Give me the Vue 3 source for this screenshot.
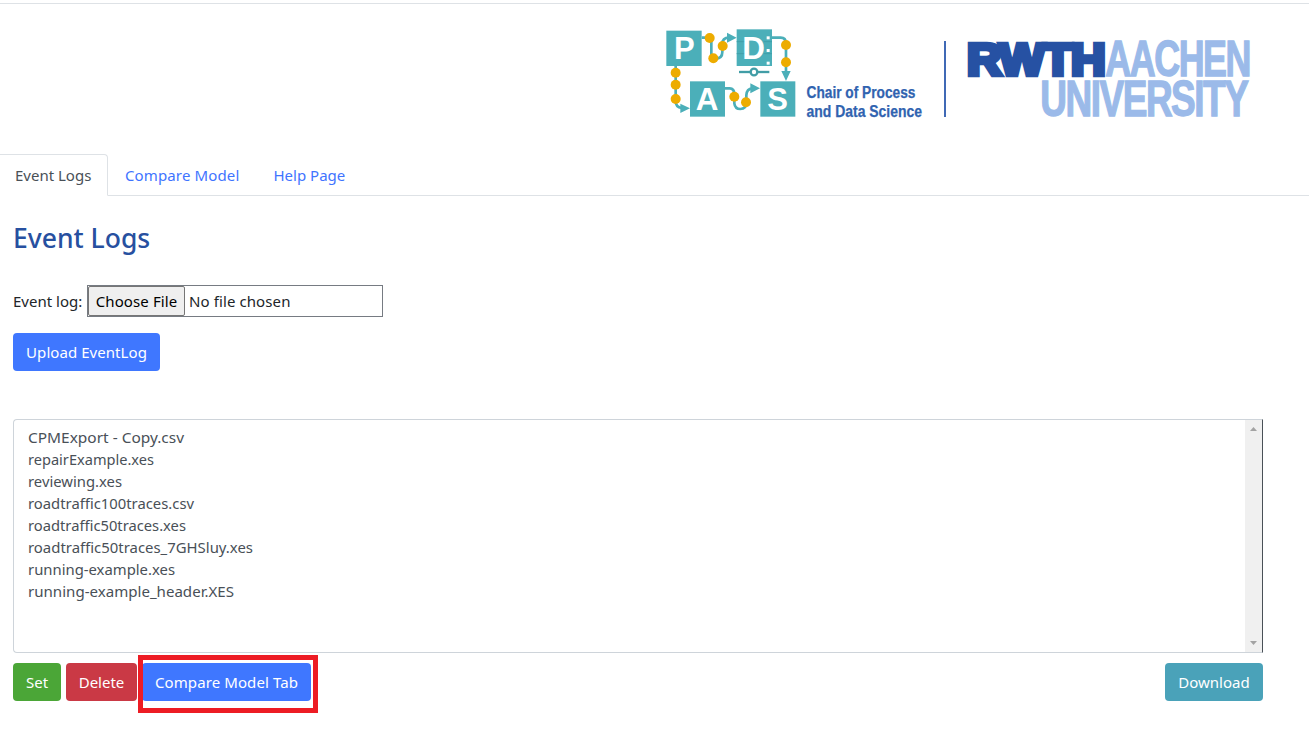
<script setup>
const files = [
  { name: 'CPMExport - Copy.csv', width: 156 },
  { name: 'repairExample.xes', width: 126 },
  { name: 'reviewing.xes', width: 94 },
  { name: 'roadtraffic100traces.csv', width: 166 },
  { name: 'roadtraffic50traces.xes', width: 158 },
  { name: 'roadtraffic50traces_7GHSluy.xes', width: 225 },
  { name: 'running-example.xes', width: 147 },
  { name: 'running-example_header.XES', width: 206 }
]
</script>

<template>
  <div class="page">
    <header class="header">
      <svg class="logos" width="610" height="105" viewBox="0 0 610 105">
        <g transform="scale(0.33333)">
          <g fill="#4bafb9">
            <rect x="34" y="32" width="106" height="106" />
            <rect x="245" y="28" width="106" height="110" />
            <rect x="105" y="184" width="105" height="106" />
            <rect x="316" y="184" width="105" height="106" />
            <path d="M216 38 L245 53 L216 68Z M379 153 H407 L393 183Z M76 251 L105 265 L76 279Z M286 190 L315 205 L286 220Z" />
          </g>
          <g fill="none" stroke="#4bafb9" stroke-width="8">
            <path d="M140 53 H164 Q169 53 169 60 V105 Q170 115 181 116 Q202 116 202 96 V72 Q202 53 222 53" />
            <path d="M351 53 H377 Q393 53 393 71 V156" />
            <path d="M62 138 V244 Q62 262 80 264" />
            <path d="M210 205 H224 Q238 206 238 222 V250 Q240 267 256 267 Q274 266 274 248 V226 Q275 206 292 205" />
          </g>
          <path d="M245 65 H270 M245 101 H270 M326 65 H351 M326 101 H351" stroke="#3f9fa9" stroke-width="3" />
          <path d="M252 156 H343" stroke="#419da6" stroke-width="7" />
          <circle cx="297" cy="156" r="10" fill="#fff" stroke="#419da6" stroke-width="7" />
          <g fill="#fff">
            <rect x="335" y="49" width="9" height="9" />
            <rect x="335" y="87" width="9" height="9" />
            <rect x="335" y="125" width="9" height="9" />
          </g>
          <g fill="#edac00">
            <circle cx="164" cy="54" r="15" /><circle cx="175" cy="115" r="15" /><circle cx="203" cy="78" r="15" />
            <circle cx="393" cy="75" r="15" /><circle cx="393" cy="127" r="15" />
            <circle cx="62" cy="158" r="15" /><circle cx="62" cy="194" r="15" /><circle cx="62" cy="237" r="15" />
            <circle cx="238" cy="230" r="15" /><circle cx="273" cy="247" r="15" />
          </g>
          <g class="tile-letter">
            <text x="57" y="117" textLength="62" lengthAdjust="spacingAndGlyphs">P</text>
            <text x="262" y="117" textLength="68" lengthAdjust="spacingAndGlyphs">D</text>
            <text x="122" y="269" textLength="68" lengthAdjust="spacingAndGlyphs">A</text>
            <text x="337" y="269" textLength="62" lengthAdjust="spacingAndGlyphs">S</text>
          </g>
        </g>
        <g class="chair">
          <text x="151.500" y="77.500" textLength="109" lengthAdjust="spacingAndGlyphs">Chair of Process</text>
          <text x="151.500" y="96.500" textLength="115.500" lengthAdjust="spacingAndGlyphs">and Data Science</text>
        </g>
        <rect x="289" y="21" width="2" height="76" fill="#4069b5" />
        <g transform="translate(300 10) scale(0.33333)">
          <text class="rwth" x="36" y="134" textLength="412" lengthAdjust="spacingAndGlyphs">RWTH</text>
          <g class="aachen">
            <text x="451" y="139" textLength="434" lengthAdjust="spacingAndGlyphs">AACHEN</text>
            <text x="256" y="257" textLength="621" lengthAdjust="spacingAndGlyphs">UNIVERSITY</text>
          </g>
        </g>
      </svg>
    </header>

    <nav class="tabs">
      <a class="tab active">Event Logs</a>
      <a class="tab compare">Compare Model</a>
      <a class="tab help">Help Page</a>
    </nav>

    <main class="content">
      <h3 class="title">Event Logs</h3>
      <div class="file-row">
        <label class="file-label">Event log:</label>
        <div class="file-input">
          <button class="choose">Choose File</button>
          <span class="chosen">No file chosen</span>
        </div>
      </div>
      <button class="btn upload">Upload EventLog</button>

      <div class="list">
        <div class="options">
          <svg v-for="file in files" :key="file.name" class="option" width="260" height="22">
            <text x="0" y="16" :textLength="file.width" lengthAdjust="spacingAndGlyphs">{{ file.name }}</text>
          </svg>
        </div>
        <div class="scrollbar">
          <svg width="7" height="4" viewBox="0 0 7 4"><path d="M0 4 L3.500 0 L7 4Z" fill="#a3a3a3" /></svg>
          <svg width="7" height="4" viewBox="0 0 7 4"><path d="M0 0 L3.500 4 L7 0Z" fill="#a3a3a3" /></svg>
        </div>
      </div>

      <div class="actions">
        <button class="btn set">Set</button>
        <button class="btn delete">Delete</button>
        <div class="highlighted">
          <button class="btn model">Compare Model Tab</button>
          <span class="marker"></span>
        </div>
        <button class="btn download">Download</button>
      </div>
    </main>
  </div>
</template>

<style>
body {
  background: #fff;
}
</style>

<style scoped>
* {
  box-sizing: border-box;
}
.page {
  height: 753px;
  padding-top: 3px;
  overflow: hidden;
  font-family: 'Noto Sans', 'Open Sans', sans-serif;
  font-size: 15px;
  line-height: 24px;
  color: #212529;
}
.header {
  height: 151px;
  border-top: 1px solid #dee2e6;
  padding: 16px 44px 0 0;
  display: flex;
  justify-content: flex-end;
}
.logos {
  display: block;
  overflow: visible;
}
.tile-letter {
  font: bold 92px 'Liberation Sans', sans-serif;
  fill: #fff;
}
.chair {
  font: bold 16.8px 'Liberation Sans', sans-serif;
  fill: #3063b0;
  stroke: #3063b0;
  stroke-width: 0.25px;
}
.rwth {
  font: bold 134px 'Liberation Sans', sans-serif;
  letter-spacing: -4px;
  fill: #2651a3;
  stroke: #2651a3;
  stroke-width: 14px;
}
.aachen {
  font: bold 149px 'Liberation Sans', sans-serif;
  letter-spacing: -6px;
  fill: #9bbae9;
  stroke: #9bbae9;
  stroke-width: 4px;
}
.tabs {
  display: flex;
  height: 42px;
  border-bottom: 1px solid #dee2e6;
}
.tab {
  height: 42px;
  padding-top: 9px;
  color: #3f74ff;
  white-space: nowrap;
}
.tab.active {
  width: 108px;
  padding-left: 15px;
  border: 1px solid #dee2e6;
  border-left: 0;
  border-bottom-color: #fff;
  border-top-right-radius: 4px;
  padding-top: 8px;
  background: #fff;
  color: #495057;
}
.compare {
  width: 148.5px;
  padding-left: 17px;
  letter-spacing: 0.13px;
}
.help {
  padding-left: 17px;
}
.content {
  padding: 25px 46px 0 13px;
}
.title {
  margin: 0;
  height: 34px;
  font-size: 26.500px;
  line-height: 34px;
  font-weight: 500;
  color: #2750a0;
  white-space: nowrap;
}
.file-row {
  display: flex;
  margin-top: 30px;
  height: 32px;
}
.file-label {
  width: 74px;
  line-height: 32px;
  white-space: nowrap;
}
.file-input {
  display: flex;
  width: 296px;
  border: 1px solid #767b82;
  line-height: 30px;
}
.choose {
  width: 97px;
  height: 30px;
  padding: 0;
  border: 1px solid #767676;
  border-radius: 2px;
  background: #efefef;
  font: inherit;
  line-height: 28px;
  letter-spacing: 0.1px;
  color: #000;
  white-space: nowrap;
}
.chosen {
  margin-left: 4px;
  letter-spacing: 0.1px;
}
.btn {
  height: 38px;
  padding: 0;
  border: 0;
  border-radius: 4px;
  font: inherit;
  color: #fff;
  white-space: nowrap;
}
.upload {
  display: block;
  width: 147px;
  margin-top: 16px;
  background: #3f77ff;
  letter-spacing: 0.06px;
}
.list {
  display: flex;
  justify-content: space-between;
  height: 234px;
  margin-top: 48px;
  border: 1px solid #ced4da;
  border-right-color: #495057;
  border-radius: 4px 0 0 4px;
}
.options {
  padding: 7px 0 0 14px;
}
.option {
  display: block;
  fill: #495057;
}
.scrollbar {
  width: 17px;
  background: #f0f0f0;
  display: flex;
  flex-direction: column;
  align-items: center;
  justify-content: space-between;
  padding: 7px 0;
}
.actions {
  display: flex;
  margin-top: 10px;
}
.set {
  width: 48px;
  background: #4ba637;
}
.delete {
  width: 71px;
  margin-left: 5px;
  background: #ca3945;
}
.highlighted {
  position: relative;
  margin-left: 5px;
}
.model {
  width: 169px;
  background: #3f77ff;
  letter-spacing: 0.1px;
}
.marker {
  position: absolute;
  left: -4px;
  top: -8px;
  width: 180px;
  height: 58px;
  border: 5px solid #ed1c24;
}
.download {
  width: 98px;
  margin-left: auto;
  background: #4aa2b9;
}
</style>
